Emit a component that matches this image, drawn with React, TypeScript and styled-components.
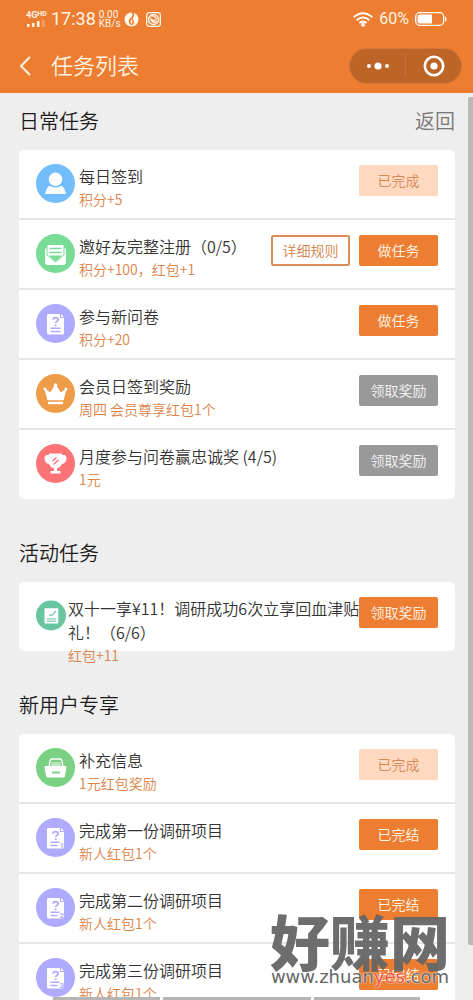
import React from "react";
import styled, { createGlobalStyle } from "styled-components";

const ORANGE = "#ed7d31";

const Global = createGlobalStyle`
  *, *::before, *::after { box-sizing: border-box; }
  body {
    margin: 0;
    background: #eeeeee;
    color: #333;
    font-family: "Noto Sans CJK SC", "Noto Sans", sans-serif;
    font-weight: 350;
    text-spacing-trim: space-all;
  }
  h1, h2, h3, p, ul { margin: 0; padding: 0; font-weight: inherit; }
  button { font-family: inherit; font-weight: inherit; border: 0; padding: 0; background: none; cursor: pointer; }
`;

const Screen = styled.div`
  position: relative;
  display: flex;
  flex-direction: column;
  height: 100vh;
  overflow: hidden;
`;

const Header = styled.header`
  flex: none;
  background: ${ORANGE};
  color: #fff4e4;
`;

const StatusBar = styled.div`
  display: flex;
  justify-content: space-between;
  align-items: center;
  height: 38px;
  padding: 0 26px;
  font-family: Roboto, sans-serif;
  font-weight: 400;
`;

const StatusGroup = styled.div<{ $gap: number }>`
  display: flex;
  align-items: center;
  gap: ${(p) => p.$gap}px;
`;

const Clock = styled.span`
  font-size: 18px;
  line-height: 20px;
`;

const Speed = styled.span`
  width: 22px;
  font-size: 10px;
  line-height: 9px;
  white-space: nowrap;
`;

const Percent = styled.span`
  font-size: 16px;
  line-height: 18px;
`;

const Network = styled.span`
  display: flex;
  flex-direction: column;
  width: 22px;
  font-size: 9px;
  line-height: 8px;
  font-weight: 700;
  sup { font-size: 7px; line-height: 6px; vertical-align: 2px; }
  svg { display: block; }
`;

const NavBar = styled.div`
  display: flex;
  align-items: center;
  height: 55px;
  padding: 0 11px 0 18px;
`;

const BackButton = styled.button`
  display: flex;
  width: 33px;
`;

const NavTitle = styled.h1`
  flex: 1;
  padding-bottom: 3px;
  font-size: 22px;
  line-height: 30px;
`;

const Capsule = styled.div`
  display: flex;
  align-items: center;
  width: 113px;
  height: 36px;
  border: 1px solid #d0763a;
  border-radius: 18px;
  background: #bd6427;
`;

const CapsuleButton = styled.button`
  display: flex;
  flex: 1;
  justify-content: center;
  align-items: center;
  & + & { border-left: 1px solid #cb7439; }
`;

const Main = styled.main`
  flex: 1;
  min-height: 0;
  overflow: hidden;
  padding: 0 18px 0 19px;
`;

const Section = styled.section`
  margin-bottom: 26px;
`;

const SectionHead = styled.div`
  display: flex;
  justify-content: space-between;
  align-items: center;
  height: 57px;
  padding-bottom: 2px;
`;

const SectionTitle = styled.h2`
  color: #1c1c1c;
  font-size: 20px;
  line-height: 28px;
`;

const ReturnLink = styled.a`
  color: #777;
  font-size: 20px;
  line-height: 28px;
  text-decoration: none;
`;

const Card = styled.ul`
  list-style: none;
  border-radius: 5px;
  background: #fff;
`;

const Row = styled.li`
  display: flex;
  align-items: flex-start;
  height: 70px;
  padding: 14px 17px 0;
  border-bottom: 2px solid #e6e6e6;
  &:last-child { height: 69px; border-bottom: 0; }
`;

const Badge = styled.svg<{ $small?: boolean }>`
  flex: none;
  display: block;
  width: ${(p) => (p.$small ? 30 : 39)}px;
  height: 39px;
`;

const Info = styled.div<{ $tight?: boolean }>`
  flex: 1;
  min-width: 0;
  margin: 0 -4px 0 ${(p) => (p.$tight ? 2 : 4)}px;
`;

const TaskTitle = styled.h3`
  font-size: 16px;
  line-height: 24px;
`;

const Reward = styled.p`
  color: #dc8449;
  font-size: 14px;
  line-height: 22px;
`;

const Actions = styled.div`
  display: flex;
  flex: none;
  gap: 9px;
  margin-top: 1px;
`;

type Kind = "primary" | "done" | "locked" | "outline";

const looks: Record<Kind, string> = {
  primary: `background: ${ORANGE}; color: #fff6e8;`,
  done: "background: #ffd8c0; color: #d78a58;",
  locked: "background: #999; color: #f4f4f4;",
  outline: "background: #fff; color: #d2834c; box-shadow: inset 0 0 0 2px #d98d58;",
};

const ActionButton = styled.button<{ $kind: Kind }>`
  width: 79px;
  height: 31px;
  padding-bottom: 2px;
  border-radius: 2px;
  font-size: 14px;
  line-height: 20px;
  white-space: nowrap;
  ${(p) => looks[p.$kind]}
`;

const ScrollThumb = styled.div`
  position: absolute;
  top: 97px;
  right: 0;
  bottom: 55px;
  width: 5px;
  border-radius: 2px 0 0 2px;
  background: #b9b9b9;
`;

const HomeBars = styled.div`
  position: absolute;
  left: 53px;
  right: 53px;
  bottom: 0;
  display: flex;
  gap: 3px;
  height: 3px;
`;

const HomeBar = styled.span<{ $grow: number }>`
  flex: ${(p) => p.$grow};
  background: #b5b5b5;
`;

const Watermark = styled.div`
  position: absolute;
  right: 23px;
  bottom: 14px;
  display: flex;
  flex-direction: column;
  align-items: center;
  color: #666;
  pointer-events: none;
`;

const WatermarkName = styled.span`
  font-size: 60px;
  font-weight: 900;
  line-height: 56px;
  opacity: 0.95;
`;

const WatermarkUrl = styled.span`
  font-family: "DejaVu Sans", sans-serif;
  font-size: 18px;
  font-weight: 400;
  line-height: 18px;
  white-space: nowrap;
  text-shadow: 0 0 1px #fff, 0 0 2px #fff;
  em { color: #f0503c; font-style: normal; }
`;

type IconName = "user" | "mail" | "survey" | "crown" | "trophy" | "check" | "basket";

const discs: Record<IconName, string> = {
  user: "#73bdfb",
  mail: "#78dc96",
  survey: "#aeaafd",
  crown: "#ee9c48",
  trophy: "#fb7377",
  check: "#69c4a0",
  basket: "#7bd183",
};

function Glyph({ name, mark }: { name: IconName; mark?: string }) {
  const c = discs[name];
  switch (name) {
    case "user":
      return (
        <g fill="#fff">
          <path d="M13 22h13q3 2.500 4 8H9q1-5.500 4-8z" opacity=".94" />
          <circle cx="19.500" cy="15.300" r="7.500" stroke={c} strokeWidth="1.500" />
        </g>
      );
    case "mail":
      return (
        <>
          <path d="M9 16q0-2 2-2h17q2 0 2 2v12q0 3-3 3H12q-3 0-3-3z" fill="#fff" />
          <path d="M11 10.500h17V21l-8.500 7-8.500-7z" fill="#fff" stroke={c} />
          <path d="M13.500 14.500h12M13.500 18.500h12" stroke={c} strokeWidth="1.500" />
          <path d="M13 21.500h13l-6.500 6z" fill={c} />
        </>
      );
    case "survey":
      return (
        <>
          <path d="M12 10h12v4h4v15q0 1.500-1.500 1.500h-14Q11 30.500 11 29V11q0-1 1-1z" fill="#fff" />
          <path d="M25 10l3 3h-3z" fill="#fff" />
          <path d="M17 15.600q.2-2 2.600-2t2.600 1.900q0 1.200-1.400 1.900-1.100.6-1.100 1.700" fill="none" stroke={c} strokeWidth="1.700" />
          <circle cx="19.700" cy="21.200" r="1" fill={c} />
          <path d={mark ? "M14.500 24.200h9M14.500 27.400h7" : "M14.500 24.200h10M14.500 27.400h10"} stroke={c} strokeWidth="1.500" />
          {mark && (
            <text x="23.500" y="30.300" fill={c} fontSize="8" fontWeight="700" fontFamily="Roboto, sans-serif">
              {mark}
            </text>
          )}
        </>
      );
    case "crown":
      return (
        <g fill="#fff">
          <path d="M9.500 16l5 3.500 5-8 5 8 5-3.500-2.500 9.500h-15z" stroke="#fff" strokeWidth="1.500" strokeLinejoin="round" />
          <circle cx="9" cy="15" r="1.600" />
          <circle cx="19.500" cy="11" r="1.700" />
          <circle cx="30" cy="15" r="1.600" />
          <path d="M12 27.800h15v2.400H12z" />
        </g>
      );
    case "trophy":
      return (
        <>
          <path d="M13 9.500h13v1.500h2.500q1.500.3 2 2.500.5 3-1.500 5-1 1-3 1.500-1.500 3.500-5 4.500v2.500h3.500v2.500h-10v-2.500H18v-2.500q-3.500-1-5-4.500-2-.5-3-1.500-2-2-1.500-5 .5-2.200 2-2.500H13z" fill="#fff" />
          <path d="M16.500 17l4-3.500M17.500 20.500l5-4.500" stroke={c} strokeWidth="1.500" />
        </>
      );
    case "check":
      return (
        <>
          <rect x="11" y="10" width="18" height="20" rx="1" fill="#fff" />
          <path d="M17 19h4l5-5.500M14 24h12M14 27h12" fill="none" stroke={c} strokeWidth="1.500" />
        </>
      );
    case "basket":
      return (
        <>
          <path d="M13 19l1-6q.4-2 2-2h8q1.600 0 2 2l1 6" fill="none" stroke="#fff" strokeWidth="1.500" />
          <path d="M15.500 14h9l1 4h-11z" fill="#fff" opacity=".45" />
          <path d="M9.500 18h20q1 0 1 1l-1.500 9q-.4 1.500-2 1.500H12q-1.600 0-2-1.500L8.500 19q0-1 1-1z" fill="#fff" />
          <path d="M16 24.500h8" stroke={c} strokeWidth="2" />
        </>
      );
  }
}

function TaskIcon({ name, mark, small }: { name: IconName; mark?: string; small?: boolean }) {
  return (
    <Badge viewBox="0 0 39 39" $small={small} aria-hidden="true">
      <circle cx="19.500" cy="19.500" r="19.500" fill={discs[name]} />
      <Glyph name={name} mark={mark} />
    </Badge>
  );
}

interface Task {
  icon: IconName;
  mark?: string;
  small?: boolean;
  title: string;
  reward: string;
  actions: [string, Kind][];
}

const groups: { title: string; back?: boolean; tasks: Task[] }[] = [
  {
    title: "日常任务",
    back: true,
    tasks: [
      { icon: "user", title: "每日签到", reward: "积分+5", actions: [["已完成", "done"]] },
      {
        icon: "mail",
        title: "邀好友完整注册（0/5）",
        reward: "积分+100，红包+1",
        actions: [["详细规则", "outline"], ["做任务", "primary"]],
      },
      { icon: "survey", title: "参与新问卷", reward: "积分+20", actions: [["做任务", "primary"]] },
      { icon: "crown", title: "会员日签到奖励", reward: "周四 会员尊享红包1个", actions: [["领取奖励", "locked"]] },
      { icon: "trophy", title: "月度参与问卷赢忠诚奖 (4/5)", reward: "1元", actions: [["领取奖励", "locked"]] },
    ],
  },
  {
    title: "活动任务",
    tasks: [
      {
        icon: "check",
        small: true,
        title: "双十一享¥11！调研成功6次立享回血津贴礼！（6/6）",
        reward: "红包+11",
        actions: [["领取奖励", "primary"]],
      },
    ],
  },
  {
    title: "新用户专享",
    tasks: [
      { icon: "basket", title: "补充信息", reward: "1元红包奖励", actions: [["已完成", "done"]] },
      { icon: "survey", mark: "1", title: "完成第一份调研项目", reward: "新人红包1个", actions: [["已完结", "primary"]] },
      { icon: "survey", mark: "2", title: "完成第二份调研项目", reward: "新人红包1个", actions: [["已完结", "primary"]] },
      { icon: "survey", mark: "3", title: "完成第三份调研项目", reward: "新人红包1个", actions: [["已完结", "primary"]] },
    ],
  },
];

function Status() {
  return (
    <StatusBar>
      <StatusGroup $gap={3}>
        <Network>
          <span>4G<sup>HD</sup></span>
          <svg width="20" height="9" viewBox="0 0 20 9" fill="currentColor">
            <path d="M1 5h2.500v3H1zM6 4h2.500v4H6zM11 2h2.500v6H11z" />
            <path d="M16 1h2.500v7H16z" opacity=".3" />
          </svg>
        </Network>
        <Clock>17:38</Clock>
        <Speed>0.00<br />KB/s</Speed>
        <svg width="15" height="15" viewBox="0 0 15 15">
          <circle cx="7.500" cy="7.500" r="7" fill="#fff8ec" />
          <path d="M7 0q3 3 0 5.500T5 10q0 3 2.500 3T10 10q0-2-1.500-3.500Q11 4 9.500 0z" fill={ORANGE} />
          <path d="M7.500 7q-2 3 0 5 2-2 0-5z" fill="#fff8ec" />
        </svg>
        <svg width="22" height="15" viewBox="-4 0 18 15" fill="none" stroke="#fff8ec" strokeWidth="1.300">
          <rect x="-1.300" y=".7" width="13.600" height="13.600" rx="2.500" />
          <circle cx="5.500" cy="7.500" r="5" />
          <path d="M2 6q4 5 7 0M3 8q3 4 6 1M3 4q3-1 5 2" />
        </svg>
      </StatusGroup>
      <StatusGroup $gap={6}>
        <svg width="20" height="15" viewBox="0 0 20 15" fill="none" stroke="#fff" strokeWidth="1.800">
          <path d="M.7 5.300q9.300-8 18.600 0M3.600 8.200q6.400-5.400 12.800 0M6.400 11q3.600-3 7.200 0" />
          <circle cx="10" cy="12.700" r="2" fill="#fff" stroke="none" />
        </svg>
        <Percent>60%</Percent>
        <svg width="32" height="14" viewBox="0 0 32 14">
          <rect x=".7" y=".7" width="28" height="12.600" rx="4" fill="none" stroke="#fff" strokeWidth="1.300" />
          <path d="M5 2.500h12v9H5q-2.500 0-2.500-2.500V5Q2.500 2.500 5 2.500z" fill="#fff" />
          <path d="M30 4.500q1.500 0 1.500 2.500T30 9.500z" fill="#fff" />
        </svg>
      </StatusGroup>
    </StatusBar>
  );
}

export default function App() {
  return (
    <>
      <Global />
      <Screen>
        <Header>
          <Status />
          <NavBar>
            <BackButton aria-label="返回">
              <svg width="14" height="20" viewBox="0 0 14 20" fill="none" stroke="#fff4e4" strokeWidth="2">
                <path d="M12 1L3 10l9 9" />
              </svg>
            </BackButton>
            <NavTitle>任务列表</NavTitle>
            <Capsule>
              <CapsuleButton aria-label="更多">
                <svg width="24" height="22" viewBox="0 0 24 22" fill="#fff">
                  <circle cx="3" cy="11" r="2" />
                  <circle cx="12" cy="11" r="3.600" />
                  <circle cx="21" cy="11" r="2" />
                </svg>
              </CapsuleButton>
              <CapsuleButton aria-label="关闭">
                <svg width="22" height="22" viewBox="0 0 22 22">
                  <circle cx="11" cy="11" r="9.200" fill="none" stroke="#fff" strokeWidth="2.600" />
                  <circle cx="11" cy="11" r="3.600" fill="#fff" />
                </svg>
              </CapsuleButton>
            </Capsule>
          </NavBar>
        </Header>
        <Main>
          {groups.map((g) => (
            <Section key={g.title}>
              <SectionHead>
                <SectionTitle>{g.title}</SectionTitle>
                {g.back && <ReturnLink href="#">返回</ReturnLink>}
              </SectionHead>
              <Card>
                {g.tasks.map((t) => (
                  <Row key={t.title}>
                    <TaskIcon name={t.icon} mark={t.mark} small={t.small} />
                    <Info $tight={t.small}>
                      <TaskTitle>{t.title}</TaskTitle>
                      <Reward>{t.reward}</Reward>
                    </Info>
                    <Actions>
                      {t.actions.map(([label, kind]) => (
                        <ActionButton key={label} $kind={kind}>{label}</ActionButton>
                      ))}
                    </Actions>
                  </Row>
                ))}
              </Card>
            </Section>
          ))}
        </Main>
        <ScrollThumb />
        <HomeBars>
          <HomeBar $grow={107} />
          <HomeBar $grow={148} />
          <HomeBar $grow={106} />
        </HomeBars>
        <Watermark>
          <WatermarkName>好赚网</WatermarkName>
          <WatermarkUrl>www.zhuan<em>yes</em>.com</WatermarkUrl>
        </Watermark>
      </Screen>
    </>
  );
}
